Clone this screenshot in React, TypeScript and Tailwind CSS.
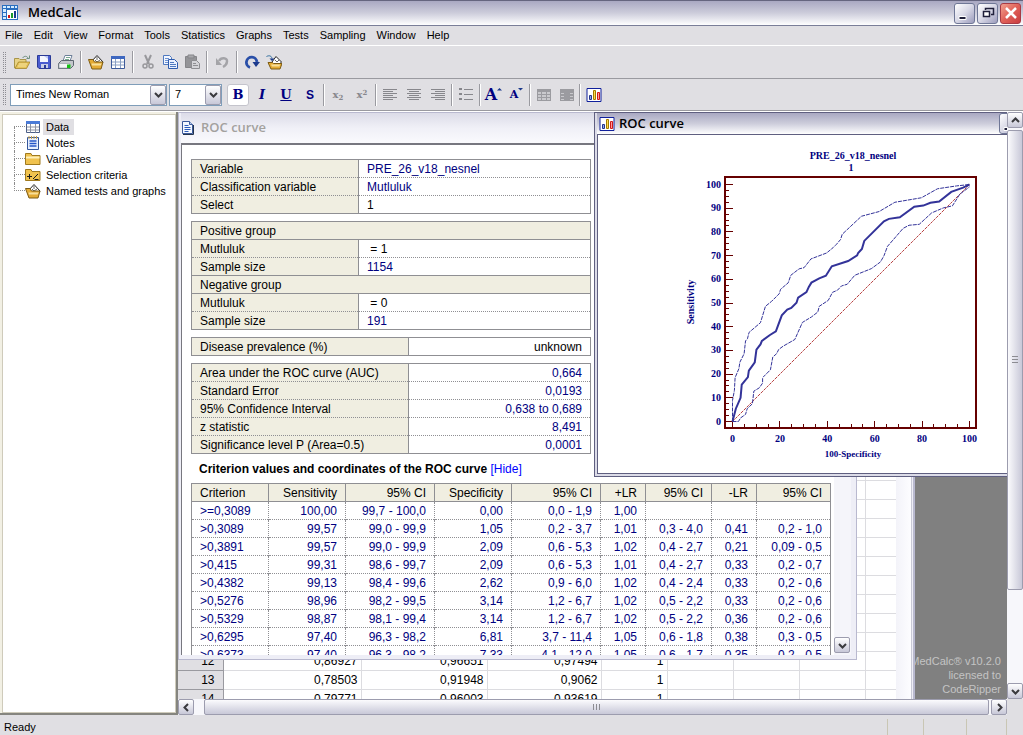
import type { ReactNode } from "react";

const menus = [
  "File", "Edit", "View", "Format", "Tools", "Statistics",
  "Graphs", "Tests", "Sampling", "Window", "Help",
];

type Point = [number, number];

const rocCurve: Point[] = [
  [0, 0], [1.4, 5.4], [3.4, 10], [3.9, 15.6], [6.5, 18.7], [6.9, 21.5], [9.4, 25], [10.1, 30.3],
  [11.8, 32.5], [12.4, 34], [15.8, 36.5], [18.3, 38], [20.8, 44.8], [23.1, 47.2], [24.8, 47.9],
  [27, 50.1], [27.7, 52.3], [31.2, 54.6], [32.2, 56.8], [33.3, 58.6], [36.6, 60.4], [39.4, 61.5],
  [41.9, 65.5], [48.8, 67.7], [52.6, 70.1], [53, 71.1], [54.6, 72.8], [55.6, 76.2], [63.9, 84.5],
  [66, 85.5], [70.6, 86.2], [76.7, 90.6], [80.5, 91.1], [83.5, 92.3], [87.2, 92.8], [92.3, 96.9],
  [97.3, 98.7], [100, 100],
];

const upperCI: Point[] = [
  [0, 0], [0, 8.9], [0.8, 13.1], [1.1, 18.5], [2.7, 22.3], [3.1, 25], [4.9, 28.6], [5.5, 34],
  [6.3, 34.9], [7, 37.6], [11.8, 41.7], [13.9, 48.6], [16.5, 50.7], [19.7, 53.9], [20.3, 55.8],
  [23.5, 58.5], [24.6, 61.7], [28.1, 64.4], [30.2, 64.9], [33.1, 68.6], [39.7, 71.1], [42.5, 73.4],
  [43.9, 74.8], [45.6, 76.8], [46.3, 79], [54.4, 86.6], [61.9, 88.6], [68.5, 92.5], [79.7, 94.4],
  [86.5, 98.2], [94.5, 99.4], [100, 100],
];

const lowerCI: Point[] = [
  [0, 0], [2.5, 0], [3.4, 1.5], [5.5, 3], [6.2, 5.4], [8.4, 7.5], [9, 12.8], [11.3, 14.2],
  [12.7, 16.2], [12.7, 18.5], [16, 21.8], [17, 27.2], [18.6, 28.6], [19.5, 30.4], [21.4, 31.8],
  [26.3, 34.6], [29.5, 41.8], [33.3, 44.1], [36, 46.2], [36.6, 48.6], [40.4, 51.1], [42.2, 54.5],
  [44.3, 55.4], [46, 57.2], [48.4, 57.9], [51.6, 61.7], [58.6, 64.5], [62.4, 67.3], [63.9, 69.9],
  [65.4, 73.9], [72, 81.5], [74.5, 82.8], [78.8, 83.2], [84, 88], [88.9, 90.1], [92.8, 91],
  [95.9, 95.9], [100, 99],
];

const criterionHead = [
  "Criterion", "Sensitivity", "95% CI", "Specificity", "95% CI", "+LR", "95% CI", "-LR", "95% CI",
];

const criterionRows = [
  [">=0,3089", "100,00", "99,7 - 100,0", "0,00", "0,0 - 1,9", "1,00", "", "", ""],
  [">0,3089", "99,57", "99,0 - 99,9", "1,05", "0,2 - 3,7", "1,01", "0,3 - 4,0", "0,41", "0,2 - 1,0"],
  [">0,3891", "99,57", "99,0 - 99,9", "2,09", "0,6 - 5,3", "1,02", "0,4 - 2,7", "0,21", "0,09 - 0,5"],
  [">0,415", "99,31", "98,6 - 99,7", "2,09", "0,6 - 5,3", "1,01", "0,4 - 2,7", "0,33", "0,2 - 0,7"],
  [">0,4382", "99,13", "98,4 - 99,6", "2,62", "0,9 - 6,0", "1,02", "0,4 - 2,4", "0,33", "0,2 - 0,6"],
  [">0,5276", "98,96", "98,2 - 99,5", "3,14", "1,2 - 6,7", "1,02", "0,5 - 2,2", "0,33", "0,2 - 0,6"],
  [">0,5329", "98,87", "98,1 - 99,4", "3,14", "1,2 - 6,7", "1,02", "0,5 - 2,2", "0,36", "0,2 - 0,6"],
  [">0,6295", "97,40", "96,3 - 98,2", "6,81", "3,7 - 11,4", "1,05", "0,6 - 1,8", "0,38", "0,3 - 0,5"],
  [">0,6373", "97,40", "96,3 - 98,2", "7,33", "4,1 - 12,0", "1,05", "0,6 - 1,7", "0,35", "0,2 - 0,5"],
];

const blank = ["", "", "", "", ""];
const sheetRows = [
  blank, blank, blank, blank, blank, blank, blank, blank, blank, blank, blank,
  ["12", "0,86927", "0,96651", "0,97494", "1"],
  ["13", "0,78503", "0,91948", "0,9062", "1"],
  ["14", "0,79771", "0,96003", "0,93619", "1"],
];

/* ---------- icons ---------- */

function Icon({ children }: { children: ReactNode }) {
  return (
    <svg width="16" height="16" viewBox="0 0 16 16" className="shrink-0">
      {children}
    </svg>
  );
}

const OpenIcon = () => (
  <Icon>
    <path d="M.5 14V4.500H5l1 1h6V9" fill="#e9d384" stroke="#a8954a" />
    <path d="M1 14.500 4.500 8H16l-3.500 6.500z" fill="#e6c45a" stroke="#9a7a1e" strokeWidth=".7" />
    <path d="M4 12h8M5 10h8" stroke="#f5e2a0" />
    <path d="M8.500 4c2-2.500 4.500-2 5.500 0M15.500 1.500v3h-3" fill="none" stroke="#6f8f80" />
  </Icon>
);

const SaveIcon = () => (
  <Icon>
    <path d="M1.500 1.500h13v13H3l-1.500-1.500z" fill="#4a5cd0" stroke="#2a3a96" />
    <path d="M4 2h8v6H4z" fill="#f4f6ff" />
    <path d="M8 2h4v3z" fill="#b9c6f4" />
    <path d="M5 10h7v4H5z" fill="#c9cfe6" />
    <path d="M8 11h2v3H8z" fill="#2a3a96" />
  </Icon>
);

const PrintIcon = () => (
  <Icon>
    <path d="m5 7 2-5.500h7L12 7z" fill="#fff" stroke="#6d7f99" />
    <path d="M8 3.500h4M7 5.500h4" stroke="#7aa890" />
    <path d="m.5 9.500 3-3h12v5l-3 3H.5z" fill="#c4c7cc" stroke="#5c6670" />
    <path d="M1 9.500h10.500v4.500H1z" fill="#f4f5f7" stroke="#9aa0a8" strokeWidth=".7" />
    <path d="M9 10.500h3.500V14H9z" fill="#14c014" />
  </Icon>
);

const NamedIcon = () => (
  <Icon>
    <path d="m3 8 6-6.500L15 8l-3 4H4z" fill="#fff" stroke="#222" />
    <path d="m7 6 2 2 3-2M9 3v3" fill="none" stroke="#666" />
    <path d="M.5 5.500H5L6.500 8H15l-2 7H4z" fill="#e4ab34" stroke="#7d5c14" />
    <path d="M3.500 9.500h10l-.8 2H4z" fill="#f8e09a" />
  </Icon>
);

const GridIcon = () => (
  <Icon>
    <path d="M1.500 2.500h13v12h-13z" fill="#fff" stroke="#3c5a9a" />
    <path d="M1 2h14v3H1z" fill="#3f68c0" />
    <path d="M2 8h12M2 11h12M5.500 5v9M10.500 5v9" stroke="#8aa0c4" />
  </Icon>
);

const CutIcon = () => (
  <Icon>
    <path d="m5 1 4 9M11 1 7 10" stroke="#98989c" strokeWidth="2" />
    <circle cx="5" cy="12" r="2" fill="none" stroke="#98989c" strokeWidth="1.500" />
    <circle cx="11" cy="12" r="2" fill="none" stroke="#98989c" strokeWidth="1.500" />
  </Icon>
);

const CopyIcon = () => (
  <Icon>
    <path d="M1.500 1.500h6l2 2v7h-8z" fill="#f2f6ff" stroke="#4f79c0" />
    <path d="M3 4.500h4M3 6.500h5M3 8.500h3" stroke="#6e93d2" />
    <path d="M6.500 5.500h6l3 3v6h-9z" fill="#e9f0ff" stroke="#2f5cae" />
    <path d="M8 8.500h4M8 10.500h6M8 12.500h6" stroke="#4f79c0" />
  </Icon>
);

const PasteIcon = () => (
  <Icon>
    <path d="M1.500 2.500h11v11h-11z" fill="#949498" stroke="#858589" />
    <path d="M4 1h6v3H4z" fill="#a8a8ac" stroke="#858589" />
    <path d="M7.500 6.500h5l3 3v5h-8z" fill="#d4d4d8" stroke="#8e8e92" />
    <path d="M9 9.500h3M9 11.500h5" stroke="#8e8e92" />
  </Icon>
);

const UndoIcon = () => (
  <Icon>
    <path d="M5 7c2-4 8.500-3.500 8 .5C12.800 10.500 11 12 9 13" fill="none" stroke="#a4a4a8" strokeWidth="2.500" />
    <path d="M2 4v7h6z" fill="#a4a4a8" />
  </Icon>
);

const RedoIcon = () => (
  <Icon>
    <path d="M6 13.500A5.300 5.300 0 1 1 13 8" fill="none" stroke="#2a4fa8" strokeWidth="2.800" />
    <path d="M8.500 8h7.500L12 13z" fill="#1c3a8c" />
  </Icon>
);

const ImportIcon = () => (
  <Icon>
    <path d="m6 8 4-5.500L15.500 8l-3 3H6z" fill="#fff" stroke="#222" />
    <path d="m9 6 2 2 2-2" fill="none" stroke="#666" />
    <path d="M2 8.500h4.500l1 1H16l-2 5.500H5z" fill="#e4ab34" stroke="#7d5c14" />
    <path d="M5 10.500h9l-.5 2H6z" fill="#f8e09a" />
    <path d="M.5 2.500c3-1.500 5-.5 5.500 2" fill="none" stroke="#2a6a9c" />
    <path d="M3.500 4.500h5L6 7z" fill="#1c3a8c" />
  </Icon>
);

const ChartIcon = () => (
  <Icon>
    <path d="M1 1.500h14v13H1z" fill="#fff" stroke="#10209c" />
    <path d="M3.500 8.500h2v4h-2z" fill="#8fa6e8" stroke="#23348c" />
    <path d="M7.500 3.500h2v9h-2z" fill="#ffd94a" stroke="#a07a00" />
    <path d="M11.500 5.500h2v7h-2z" fill="#ff9a9a" stroke="#d01818" />
  </Icon>
);

const AppIcon = () => (
  <Icon>
    <path d="M0 0h16v15H0z" fill="#2a6ec0" />
    <path d="M1 1h3v2H1zM5 1h3v2H5zM9 1h3v2H9zM13 1h2v2h-2zM1 4h3v3H1zM1 8h3v3H1zM1 12h3v2H1z" fill="#d6ecff" />
    <path d="M5 5h10v9H5z" fill="#fff" />
    <path d="M6 10h2v3H6z" fill="#d01818" />
    <path d="M9 8h2v5H9z" fill="#1a9c2a" />
    <path d="M12 6h2v7h-2z" fill="#1c3a8c" />
  </Icon>
);

const ReportIcon = () => (
  <Icon>
    <path d="M1.500 1.500h7l3 3v9h-10z" fill="#f4f8ff" stroke="#3c5a9a" />
    <path d="M8.500 1.500v3h3" fill="#b9cdf0" stroke="#3c5a9a" />
    <path d="M3.500 5.500h4M3.500 7.500h6M3.500 9.500h6M3.500 11.500h4" stroke="#2d5dbb" />
    <path d="M2 14.500h10.500V5" fill="none" stroke="#23344f" />
  </Icon>
);

const DataIcon = () => (
  <Icon>
    <path d="M1.500 2.500h13v11h-13z" fill="#fff" stroke="#4d5f86" />
    <path d="M1 2h14v3H1z" fill="#4a7bd8" />
    <path d="M2 8h12M2 11h12M5.500 5v8.500M10.500 5v8.500" stroke="#8d93a3" />
  </Icon>
);

const NotesIcon = () => (
  <Icon>
    <path d="M2.500 2.500h11v12h-11z" fill="#e8f0ff" stroke="#33569c" />
    <path d="M4 1v3M6.500 1v3M9 1v3M11.500 1v3" stroke="#c9a24a" />
    <path d="M4.500 6h7M4.500 8.500h7M4.500 11h7" stroke="#2456c8" strokeWidth="1.500" />
  </Icon>
);

const FolderIcon = () => (
  <Icon>
    <path d="M.5 13.500v-11H6l1 2h8v9z" fill="#f0c24e" stroke="#a07a1e" />
    <path d="M1 6.500h13.500" stroke="#fff0b8" strokeWidth="2" />
  </Icon>
);

const CriteriaIcon = () => (
  <Icon>
    <path d="M.5 13.500v-11H6l1 2h8v9z" fill="#f0c24e" stroke="#a07a1e" />
    <path d="M2 9.500h5M4.500 7v5M8 12l5-5M9.500 12.500h4" stroke="#1a1a1a" />
  </Icon>
);

const Align = ({ d }: { d: string }) => (
  <Icon>
    <path d={d} stroke="#87878c" />
  </Icon>
);

const GrayGrid = ({ column = false }) => (
  <Icon>
    <path d="M1 2h14v12H1z" fill="#9b9ba0" />
    <path
      d={column ? "M2 6h3v1H2zM2 9h3v1H2zM2 12h3v1H2zM11 6h3v1h-3zM11 9h3v1h-3zM11 12h3v1h-3z" : "M2 5h3v2H2zM6 5h4v2H6zM11 5h3v2h-3zM2 8h3v2H2zM6 8h4v2H6zM11 8h3v2h-3zM2 11h3v2H2zM6 11h4v2H6zM11 11h3v2h-3z"}
      fill="#c9c9cd"
    />
  </Icon>
);

/* ---------- window chrome ---------- */

function Chevron({ d }: { d: string }) {
  return (
    <svg width="9" height="9" viewBox="0 0 9 9">
      <path d={d} fill="none" stroke="#3a3a3e" strokeWidth="2" />
    </svg>
  );
}

const up = "M1 6 4.500 2.500 8 6";
const down = "M1 3 4.500 6.500 8 3";
const left = "M6 1 2.500 4.500 6 8";
const right = "M3 1 6.500 4.500 3 8";

function ScrollButton({ label, d }: { label: string; d: string }) {
  return (
    <button
      aria-label={label}
      className="flex h-4 w-4 shrink-0 items-center justify-center rounded-[2px] border border-[#9c9cae] bg-linear-to-b from-white to-[#c8c8d8]"
    >
      <Chevron d={d} />
    </button>
  );
}

function CaptionButton({ label, close = false, children }: { label: string; close?: boolean; children: ReactNode }) {
  return (
    <button
      aria-label={label}
      className={`flex h-[21px] w-[21px] shrink-0 items-center justify-center rounded-[3px] border ${
        close
          ? "border-[#a83a44] bg-linear-to-br from-[#f0a090] via-[#e06058] to-[#c83c40]"
          : "border-[#6f7796] bg-linear-to-br from-white via-[#d8d8e6] to-[#9c9cbc]"
      }`}
    >
      {children}
    </button>
  );
}

const MinimizeGlyph = () => (
  <Icon>
    <path d="M2 11.500h7v3H2z" fill="#1f1f3a" stroke="#fff" />
  </Icon>
);

const RestoreGlyph = () => (
  <Icon>
    <path d="M5.500 5V3.500h8v6H11" fill="none" stroke="#1f1f3a" strokeWidth="1.500" />
    <path d="M3.500 6.500h6v5h-6z" fill="#fff" stroke="#1f1f3a" strokeWidth="1.500" />
  </Icon>
);

const CloseGlyph = () => (
  <Icon>
    <path d="m3 3 10 10M13 3 3 13" stroke="#fff" strokeWidth="2.500" />
  </Icon>
);

function Separator() {
  return (
    <span className="flex w-1 shrink-0 justify-center">
      <span className="h-[22px] w-0.5 border-r border-l border-r-white border-l-[#9a9aa0]" />
    </span>
  );
}

function Grip() {
  return <span className="mx-[3px] h-[21px] w-[3px] border-x border-dotted border-[#8c8c92]" />;
}

function Tool({ label, children }: { label: string; children: ReactNode }) {
  return (
    <button aria-label={label} className="flex h-[22px] w-[22px] shrink-0 items-center justify-center">
      {children}
    </button>
  );
}

function FormatTool({ label, narrow = false, children }: { label: string; narrow?: boolean; children: ReactNode }) {
  return (
    <button
      aria-label={label}
      className={`flex h-[22px] shrink-0 items-center justify-center text-[13px] font-bold text-[#000080] ${
        narrow ? "w-[23px]" : "w-6"
      }`}
    >
      {children}
    </button>
  );
}

function Combo({ label, value, className }: { label: string; value: string; className: string }) {
  return (
    <div className={`relative h-[22px] shrink-0 border border-[#7f9db9] bg-white ${className}`}>
      <select
        aria-label={label}
        className="h-full w-full appearance-none bg-transparent pl-[5px] text-[11px] outline-none"
      >
        <option>{value}</option>
      </select>
      <span className="pointer-events-none absolute inset-y-0 right-0 flex w-4 items-center justify-center rounded-[2px] border border-[#9c9cae] bg-linear-to-b from-white to-[#c8c8d8]">
        <Chevron d={down} />
      </span>
    </div>
  );
}

function StandardToolbar() {
  return (
    <div className="flex h-[33px] items-center border-b border-[#9a9aa0]">
      <Grip />
      <div className="flex items-center pl-0.5">
        <Tool label="Open"><OpenIcon /></Tool>
        <Tool label="Save"><SaveIcon /></Tool>
        <Tool label="Print"><PrintIcon /></Tool>
        <span className="flex w-2 justify-center"><Separator /></span>
        <Tool label="Named tests"><NamedIcon /></Tool>
        <Tool label="Spreadsheet"><GridIcon /></Tool>
        <span className="flex w-2 justify-center"><Separator /></span>
        <Tool label="Cut"><CutIcon /></Tool>
        <Tool label="Copy"><CopyIcon /></Tool>
        <Tool label="Paste"><PasteIcon /></Tool>
        <span className="flex w-2 justify-center"><Separator /></span>
        <Tool label="Undo"><UndoIcon /></Tool>
        <span className="flex w-2 justify-center"><Separator /></span>
        <Tool label="Recalculate"><RedoIcon /></Tool>
        <Tool label="Recent"><ImportIcon /></Tool>
      </div>
    </div>
  );
}

function FormatToolbar() {
  return (
    <div className="flex h-8 items-center border-b border-[#9a9aa0]">
      <Grip />
      <div className="flex items-center gap-0.5 pl-px">
        <Combo label="Font" value="Times New Roman" className="w-[157px]" />
        <Combo label="Font size" value="7" className="w-[53px]" />
      </div>
      <div className="flex items-center pl-1 font-['DejaVu_Serif',serif]">
        <FormatTool label="Bold">
          <span className="flex h-[22px] w-[22px] items-center justify-center rounded-[3px] border border-[#c4c4cc] bg-white">B</span>
        </FormatTool>
        <FormatTool label="Italic"><span className="italic">I</span></FormatTool>
        <FormatTool label="Underline"><span className="underline">U</span></FormatTool>
        <FormatTool label="Symbol"><span className="font-['Liberation_Sans',sans-serif] text-[12px]">S</span></FormatTool>
        <Separator />
        <FormatTool label="Subscript">
          <span className="text-[10px] text-[#87878c]">x<sub className="text-[7px]">2</sub></span>
        </FormatTool>
        <FormatTool label="Superscript">
          <span className="text-[10px] text-[#87878c]">x<sup className="text-[7px]">2</sup></span>
        </FormatTool>
        <Separator />
        <FormatTool label="Align left">
          <Align d="M1 2.500h14M1 4.500h10M1 6.500h14M1 8.500h10M1 10.500h14M1 12.500h10" />
        </FormatTool>
        <FormatTool label="Center">
          <Align d="M1 2.500h14M3 4.500h10M1 6.500h14M3 8.500h10M1 10.500h14M3 12.500h10" />
        </FormatTool>
        <FormatTool label="Align right">
          <Align d="M1 2.500h14M5 4.500h10M1 6.500h14M5 8.500h10M1 10.500h14M5 12.500h10" />
        </FormatTool>
        <Separator />
        <FormatTool label="Bullets">
          <Align d="M1 2.500h3M1 1.500h3M6 2.500h9M1 7.500h3M1 6.500h3M6 7.500h9M1 12.500h3M1 11.500h3M6 12.500h9" />
        </FormatTool>
        <Separator />
        <FormatTool label="Grow font" narrow>
          <span className="text-base leading-none">A</span>
          <svg width="5" height="16" viewBox="0 0 5 16"><path d="M0 3.500 2.500 1 5 3.500z" fill="#1c3a8c" /></svg>
        </FormatTool>
        <FormatTool label="Shrink font" narrow>
          <span className="text-[11px] leading-none">A</span>
          <svg width="5" height="16" viewBox="0 0 5 16"><path d="M0 1h5L2.500 3.500z" fill="#1c3a8c" /></svg>
        </FormatTool>
        <Separator />
        <FormatTool label="Format cells" narrow><GrayGrid /></FormatTool>
        <FormatTool label="Format column" narrow><GrayGrid column /></FormatTool>
        <Separator />
        <FormatTool label="Chart" narrow><ChartIcon /></FormatTool>
      </div>
    </div>
  );
}

const treeItems = [
  { label: "Data", icon: <DataIcon /> },
  { label: "Notes", icon: <NotesIcon /> },
  { label: "Variables", icon: <FolderIcon /> },
  { label: "Selection criteria", icon: <CriteriaIcon /> },
  { label: "Named tests and graphs", icon: <NamedIcon /> },
];

function Explorer() {
  return (
    <nav className="w-[178px] shrink-0 border-r-2 border-b-2 border-[#85857f] bg-[#f2f0e4] pt-0.5 pl-0.5">
      <ul className="h-full border border-[#cfcbbb] bg-white pt-1 pl-[11px]">
        {treeItems.map((item, i) => (
          <li key={item.label} className="flex h-4 items-center">
            <span className="flex h-4 w-[11px] shrink-0 flex-col">
              <span className={`h-2 border-b border-dotted border-[#8c8c8c] ${i > 0 ? "border-l" : ""}`} />
              {i < treeItems.length - 1 && <span className="h-2 border-l border-dotted border-[#8c8c8c]" />}
            </span>
            {item.icon}
            <a
              href="#"
              className={`ml-0.5 h-4 px-[3px] leading-4 whitespace-nowrap ${i === 0 ? "bg-[#e0dfe3] pr-[5px]" : ""}`}
            >
              {item.label}
            </a>
          </li>
        ))}
      </ul>
    </nav>
  );
}

/* ---------- report ---------- */

type Row = { label: string; value?: string; plain?: boolean };

function InfoTable({ rows, wide = false }: { rows: Row[]; wide?: boolean }) {
  return (
    <table className="mb-[7px] w-[400px] table-fixed border-collapse border border-[#8f8f93]">
      <colgroup>
        <col className={wide ? "w-[217px]" : "w-[167px]"} />
        <col />
      </colgroup>
      <tbody>
        {rows.map((row, i) =>
          row.value === undefined ? (
            <tr key={i} className="h-[18px]">
              <th colSpan={2} className="border border-[#8f8f93] bg-[#f0eee1] px-2 py-0 text-left font-normal">
                {row.label}
              </th>
            </tr>
          ) : (
            <tr key={i} className="h-[18px] border-b border-dotted border-[#8f8f93] last:border-solid">
              <th className="border-r border-r-[#8f8f93] bg-[#f0eee1] px-2 py-0 text-left font-normal whitespace-nowrap">
                {row.label}
              </th>
              <td className={`px-2 py-0 whitespace-pre ${wide ? "text-right" : ""} ${row.plain ? "text-black" : "text-[#000080]"}`}>
                {row.value}
              </td>
            </tr>
          )
        )}
      </tbody>
    </table>
  );
}

function CriterionTable() {
  return (
    <table className="w-[640px] table-fixed border-collapse border border-[#8f8f93] text-right">
      <colgroup>
        <col className="w-[77px]" />
        <col className="w-[77px]" />
        <col className="w-[89px]" />
        <col className="w-[77px]" />
        <col className="w-[89px]" />
        <col className="w-[45px]" />
        <col className="w-[66px]" />
        <col className="w-[45px]" />
        <col />
      </colgroup>
      <thead>
        <tr className="h-[18px]">
          {criterionHead.map((h, i) => (
            <th key={i} className="border border-[#8f8f93] bg-[#f0eee1] px-2 py-0 font-normal first:text-left">
              {h}
            </th>
          ))}
        </tr>
      </thead>
      <tbody className="text-[#000080]">
        {criterionRows.map((row, i) => (
          <tr key={i} className="h-[18px] border-b border-dotted border-[#8f8f93]">
            {row.map((cell, j) => (
              <td
                key={j}
                className="border-r border-dotted border-[#8f8f93] px-2 py-0 whitespace-nowrap first:text-left last:border-solid"
              >
                {cell}
              </td>
            ))}
          </tr>
        ))}
      </tbody>
    </table>
  );
}

function ReportWindow() {
  return (
    <section className="absolute top-0 left-0 flex h-[548px] w-[679px] flex-col border border-[#b9b9cf] bg-[#eeeef6] pr-[5px] pb-1 pl-0.5">
      <header className="flex h-[30px] shrink-0 items-center gap-1 bg-linear-to-b from-[#dcdce8] via-[#f0f0f7] to-[#fafafd]">
        <ReportIcon />
        <h2 className="font-['Open_Sans',sans-serif] text-[13px] font-semibold text-[#a3a19e]">ROC curve</h2>
      </header>
      <div className="flex min-h-0 flex-1 border-t-2 border-l border-[#77777f] bg-white">
        <div className="min-w-0 flex-1 overflow-hidden pt-3.5 pl-[9px] text-[12px] leading-[16px]">
          <InfoTable
            rows={[
              { label: "Variable", value: "PRE_26_v18_nesnel" },
              { label: "Classification variable", value: "Mutluluk" },
              { label: "Select", value: "1", plain: true },
            ]}
          />
          <InfoTable
            rows={[
              { label: "Positive group" },
              { label: "Mutluluk", value: " = 1", plain: true },
              { label: "Sample size", value: "1154" },
              { label: "Negative group" },
              { label: "Mutluluk", value: " = 0", plain: true },
              { label: "Sample size", value: "191" },
            ]}
          />
          <InfoTable wide rows={[{ label: "Disease prevalence (%)", value: "unknown", plain: true }]} />
          <InfoTable
            wide
            rows={[
              { label: "Area under the ROC curve (AUC)", value: "0,664" },
              { label: "Standard Error", value: "0,0193" },
              { label: "95% Confidence Interval", value: "0,638 to 0,689" },
              { label: "z statistic", value: "8,491" },
              { label: "Significance level P (Area=0.5)", value: "0,0001" },
            ]}
          />
          <h3 className="mb-1.5 pl-2 font-bold">
            Criterion values and coordinates of the ROC curve{" "}
            <a href="#" className="font-normal text-[#0000ff]">[Hide]</a>
          </h3>
          <CriterionTable />
        </div>
        <div className="flex w-[17px] flex-col justify-end bg-[#f5f5fa] pb-0.5">
          <ScrollButton label="Scroll down" d={down} />
        </div>
      </div>
    </section>
  );
}

/* ---------- data sheet ---------- */

function SheetWindow() {
  return (
    <section className="absolute top-[300px] left-0 flex w-[737px] flex-col border-r-2 border-[#b9b9cf] bg-[#eeeef6]">
      <header className="h-[30px] bg-[#eeeef6]" />
      <div className="flex">
        <table className="w-[718px] table-fixed border-collapse bg-white text-right text-[12px] leading-[16px]">
          <colgroup>
            <col className="w-[45px]" />
            <col className="w-[138px]" />
            <col className="w-[126px]" />
            <col className="w-[114px]" />
            <col className="w-[66px]" />
            <col className="w-[66px]" />
            <col className="w-[66px]" />
            <col className="w-[66px]" />
            <col />
          </colgroup>
          <tbody>
            {sheetRows.map((row, i) => (
              <tr key={i} className="h-[19px]">
                <th className="border-r border-b border-[#9a9aa0] bg-[#e0dfe3] px-2 py-0 font-normal">{row[0]}</th>
                {row.slice(1).map((cell, j) => (
                  <td key={j} className="border border-[#dcdce0] px-[3px] py-0">{cell}</td>
                ))}
                <td className="border border-[#dcdce0]" />
                <td className="border border-[#dcdce0]" />
                <td className="border border-[#dcdce0]" />
                <td className="border-b border-[#dcdce0]" />
              </tr>
            ))}
          </tbody>
        </table>
        <div className="w-4 border-r border-[#c9c9d6] bg-linear-to-r from-[#f3f3f9] to-[#fdfdff]" />
      </div>
    </section>
  );
}

/* ---------- chart ---------- */

const px = (v: number) => 134.5 + v * 2.37;
const py = (v: number) => 286.5 - v * 2.37;
const toPoints = (points: Point[]) => points.map(([x, y]) => `${px(x)},${py(y)}`).join(" ");

const yMajor = Array.from({ length: 11 }, (_, i) => i * 10);
const yMinor = Array.from({ length: 41 }, (_, i) => i * 2.5);
const xMajor = [0, 20, 40, 60, 80, 100];
const xMinor = Array.from({ length: 21 }, (_, i) => i * 5);

function RocChart() {
  return (
    <svg
      width="420"
      height="338"
      viewBox="0 0 420 338"
      className="font-['Liberation_Serif',serif] text-[10px] font-bold"
      fill="#000080"
    >
      <g textAnchor="middle">
        <text x="255" y="24">PRE_26_v18_nesnel</text>
        <text x="253" y="36">1</text>
        <text x="255" y="322" className="text-[9px]">100-Specificity</text>
        <text transform="translate(96 167) rotate(-90)">Sensitivity</text>
        {xMajor.map((v) => (
          <text key={v} x={px(v)} y="307">{v}</text>
        ))}
      </g>
      <g textAnchor="end">
        {yMajor.map((v) => (
          <text key={v} x="123" y={py(v) + 3}>{v}</text>
        ))}
      </g>
      <g stroke="#660000" shapeRendering="crispEdges">
        <rect x="127" y="42" width="251" height="251" fill="none" strokeWidth="2" />
        {yMajor.map((v) => <line key={v} x1="128" x2="135" y1={py(v)} y2={py(v)} />)}
        {yMinor.map((v) => <line key={v} x1="128" x2="131" y1={py(v)} y2={py(v)} />)}
        {xMajor.map((v) => <line key={v} x1={px(v)} x2={px(v)} y1="286" y2="292" />)}
        {xMinor.map((v) => <line key={v} x1={px(v)} x2={px(v)} y1="289" y2="292" />)}
      </g>
      <line x1={px(0)} y1={py(0)} x2={px(100)} y2={py(100)} stroke="#b84040" strokeDasharray="3 1" />
      <g fill="none" stroke="#333399">
        <polyline points={toPoints(upperCI)} strokeDasharray="4 1" />
        <polyline points={toPoints(lowerCI)} strokeDasharray="4 1" />
        <polyline points={toPoints(rocCurve)} strokeWidth="2" />
      </g>
    </svg>
  );
}

function ChartWindow() {
  return (
    <section className="absolute top-0 left-[416px] w-[479px] border border-[#5f5f80] bg-[#dcdce8] px-0.5 pb-0.5">
      <header className="flex h-[21px] items-center gap-1 bg-linear-to-b from-[#a9a8c2] via-[#cdcddb] to-white pr-1 pl-0.5">
        <ChartIcon />
        <h2 className="flex-1 font-['Open_Sans',sans-serif] text-[13px] font-semibold">ROC curve</h2>
        <div className="flex gap-0.5">
          <CaptionButton label="Minimize chart"><MinimizeGlyph /></CaptionButton>
          <CaptionButton label="Restore chart"><RestoreGlyph /></CaptionButton>
          <CaptionButton label="Close chart" close><CloseGlyph /></CaptionButton>
        </div>
      </header>
      <div className="border border-[#5f5f80] bg-white">
        <RocChart />
      </div>
    </section>
  );
}

export default function App() {
  return (
    <div className="flex h-screen min-h-[600px] flex-col overflow-hidden bg-[#e0dfe3] font-['Liberation_Sans',sans-serif] text-[11px] text-black">
      <header className="flex h-[26px] shrink-0 items-center gap-2.5 border-t border-b border-t-[#65657f] border-b-[#7a7e98] bg-linear-to-b from-[#a9a8c2] via-[#cdcddb] to-white px-0.5">
        <AppIcon />
        <h1 className="flex-1 font-['Open_Sans',sans-serif] text-[13px] font-semibold">MedCalc</h1>
        <div className="flex gap-0.5">
          <CaptionButton label="Minimize"><MinimizeGlyph /></CaptionButton>
          <CaptionButton label="Restore"><RestoreGlyph /></CaptionButton>
          <CaptionButton label="Close" close><CloseGlyph /></CaptionButton>
        </div>
      </header>

      <nav className="flex h-5 shrink-0 items-center gap-[11px] border-b border-white pl-[5px]">
        {menus.map((m) => (
          <button key={m}>{m}</button>
        ))}
      </nav>

      <StandardToolbar />
      <FormatToolbar />

      <div className="flex min-h-0 flex-1 border-t border-white">
        <Explorer />
        <div className="flex min-w-0 flex-1 flex-col">
          <div className="flex min-h-0 flex-1">
            <main className="relative min-w-0 flex-1 overflow-hidden bg-[#808080]">
              <p className="absolute right-1.5 bottom-[3px] text-right leading-[14px] text-[#c4c4c4]">
                MedCalc® v10.2.0
                <br />
                licensed to
                <br />
                CodeRipper
              </p>
              <SheetWindow />
              <ReportWindow />
              <ChartWindow />
            </main>
            <div className="flex w-4 shrink-0 flex-col bg-[#f7f7fb]">
              <ScrollButton label="Scroll up" d={up} />
              <div className="my-0.5 flex flex-[5] items-center justify-center rounded-[2px] border border-[#9c9cae] bg-linear-to-r from-[#fbfbfd] to-[#c8c8d8]">
                <span className="h-[7px] w-1.5 border-y border-[#8c8c92]">
                  <span className="mt-0.5 block h-px bg-[#8c8c92]" />
                </span>
              </div>
              <div className="flex-1" />
              <ScrollButton label="Scroll down workspace" d={down} />
            </div>
          </div>
          <div className="flex h-4 shrink-0 bg-[#f7f7fb]">
            <ScrollButton label="Scroll left" d={left} />
            <div className="mr-0.5 ml-2.5 flex flex-1 items-center justify-center rounded-[2px] border border-[#9c9cae] bg-linear-to-b from-[#fbfbfd] to-[#c8c8d8]">
              <span className="h-1.5 w-[7px] border-x border-[#8c8c92]">
                <span className="ml-0.5 block h-1.5 w-px bg-[#8c8c92]" />
              </span>
            </div>
            <ScrollButton label="Scroll right" d={right} />
            <div className="w-4 bg-[#e0dfe3]" />
          </div>
        </div>
      </div>

      <footer className="flex h-5 shrink-0 items-stretch pt-1 pl-1">
        <span className="flex-1 leading-[16px]">Ready</span>
        <span className="w-9 border-l border-[#c9c6b4]" />
        <span className="w-[43px] border-l border-[#c9c6b4]" />
        <span className="w-10 border-l border-[#c9c6b4]" />
        <span className="w-[17px] border-l border-[#c9c6b4]" />
      </footer>
    </div>
  );
}
